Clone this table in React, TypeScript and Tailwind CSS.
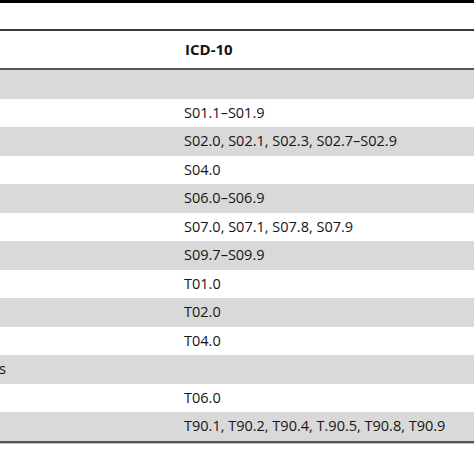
const rows: { left?: string; code: string }[] = [
  { code: "" },
  { code: "S01.1–S01.9" },
  { code: "S02.0, S02.1, S02.3, S02.7–S02.9" },
  { code: "S04.0" },
  { code: "S06.0–S06.9" },
  { code: "S07.0, S07.1, S07.8, S07.9" },
  { code: "S09.7–S09.9" },
  { code: "T01.0" },
  { code: "T02.0" },
  { code: "T04.0" },
  { left: "s", code: "" },
  { code: "T06.0" },
  { code: "T90.1, T90.2, T90.4, T.90.5, T90.8, T90.9" },
]

export default function App() {
  return (
    <div
      className="w-[474px] h-[474px] bg-white text-[#151515] overflow-hidden"
      style={{ fontFamily: '"Open Sans", "Noto Sans", sans-serif' }}
    >
      <div className="h-[3px] bg-black" />
      <div className="h-[26px]" />
      <div className="h-[2px] bg-[#3a3a3a]" />
      <div className="h-[37px] flex items-center">
        <div className="w-[185px]" />
        <div className="text-[15px] font-bold leading-none">ICD-10</div>
      </div>
      <div className="h-[2px] bg-[#585858]" />
      <div>
        {rows.map((row, i) => (
          <div
            key={i}
            className={`h-[28.54px] flex items-center text-[14.5px] leading-none ${
              i % 2 === 0 ? "bg-[#d9d9d9]" : "bg-white"
            }`}
          >
            <div className="w-[185px] -ml-[1px]">{row.left}</div>
            <div>{row.code}</div>
          </div>
        ))}
      </div>
      <div className="h-[2px] bg-[#585858]" />
      <div className="h-px bg-[#bdbdbd]" />
    </div>
  )
}
